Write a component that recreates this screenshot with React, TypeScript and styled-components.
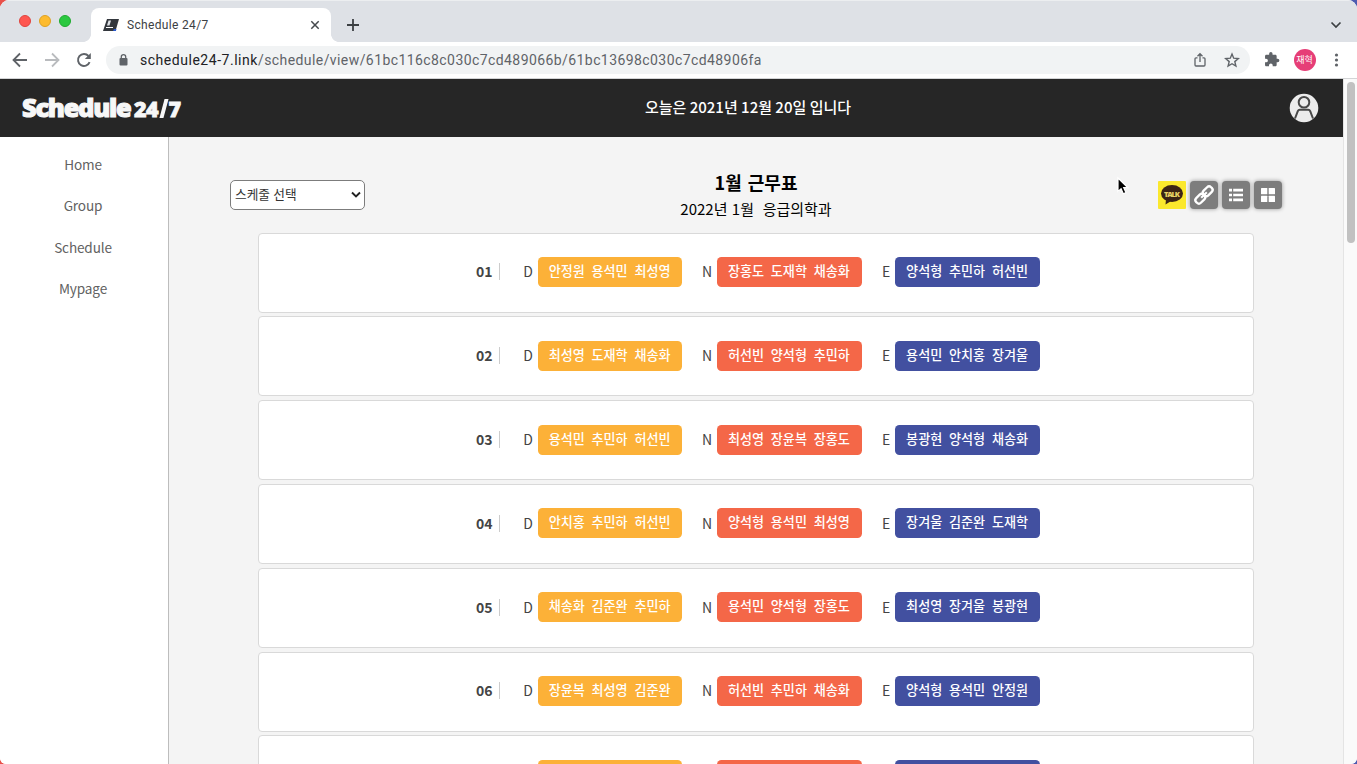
import React from 'react';
import styled, { createGlobalStyle } from 'styled-components';

const Global = createGlobalStyle`
  * { box-sizing: border-box; }
  html, body { margin: 0; height: 764px; overflow: hidden; }
  body { background: linear-gradient(90deg, #e8504a 50%, #4d5bb0 50%); font-family: "Noto Sans CJK KR", sans-serif; }
`;

const Window = styled.div`
  width: 1357px;
  height: 764px;
  display: flex;
  flex-direction: column;
  overflow: hidden;
  border-radius: 9px 9px 6px 6px;
  background: #fff;
`;

const TabStrip = styled.div`
  height: 42px;
  flex: none;
  display: flex;
  align-items: center;
  background: #dee1e6;
  box-shadow: inset 0 1px 0 #eceef0;
  padding: 0 14px 0 19px;
`;

const Lights = styled.div`
  display: flex;
  gap: 8px;
  width: 72px;
`;

const Light = styled.i<{ $color: string; $edge: string }>`
  width: 12px;
  height: 12px;
  border-radius: 50%;
  background: ${(p) => p.$color};
  border: 1px solid ${(p) => p.$edge};
`;

const Tab = styled.div`
  align-self: flex-end;
  width: 240px;
  height: 34px;
  padding: 0 10px 0 12px;
  display: flex;
  align-items: center;
  background: #fff;
  border-radius: 8px 8px 0 0;
  position: relative;
  &::before, &::after {
    content: '';
    position: absolute;
    bottom: 0;
    width: 8px;
    height: 8px;
  }
  &::before { left: -8px; background: radial-gradient(circle at 0 0, #dee1e6 7.6px, #fff 8.2px); }
  &::after { right: -8px; background: radial-gradient(circle at 100% 0, #dee1e6 7.6px, #fff 8.2px); }
`;

const TabTitle = styled.span`
  flex: 1;
  margin-left: 8px;
  font: 12px/16px Roboto, sans-serif;
  letter-spacing: 0.33px;
  color: #3c4043;
`;

const NewTab = styled.div`
  display: flex;
  flex: 1;
  padding: 7px 0 0 15px;
`;

const Chevron = styled.div`
  display: flex;
  padding-top: 7px;
`;

const Toolbar = styled.div`
  height: 37px;
  flex: none;
  display: flex;
  align-items: center;
  border-bottom: 1px solid #d3d4d6;
  padding: 0 13px 0 12px;
  background: #fff;
`;

const NavButtons = styled.div`
  display: flex;
  gap: 16px;
  width: 94px;
`;

const AddressBar = styled.div`
  width: 1144px;
  height: 28px;
  border-radius: 14px;
  background: #f1f3f4;
  display: flex;
  align-items: center;
  padding: 0 10px 0 11px;
  gap: 16px;
`;

const Url = styled.span`
  flex: 1;
  margin-left: -6px;
  font: 14px/20px Roboto, sans-serif;
  letter-spacing: 0.42px;
  color: #5f6368;
  b { font-weight: 400; letter-spacing: 0.53px; color: #202124; }
`;

const Extensions = styled.div`
  flex: 1;
  display: flex;
  align-items: center;
  justify-content: space-between;
  margin-left: 12px;
`;

const Profile = styled.span`
  width: 22px;
  height: 22px;
  border-radius: 50%;
  background: #e63e77;
  color: #fff;
  font: 9px/21px "Noto Sans CJK KR", sans-serif;
  text-align: center;
  margin-left: -1px;
`;

const Viewport = styled.div`
  flex: 1;
  min-height: 0;
  display: flex;
`;

const Page = styled.div`
  width: 1343px;
  display: flex;
  flex-direction: column;
`;

const Scrollbar = styled.div`
  width: 14px;
  background: #fafafa;
  border-left: 1px solid #e4e4e4;
  padding: 3px 1px 0 3px;
`;

const Thumb = styled.div`
  width: 8px;
  height: 161px;
  border-radius: 4px;
  background: #c1c1c1;
`;

const Header = styled.header`
  height: 58px;
  flex: none;
  display: flex;
  align-items: center;
  background: #262626;
  padding: 0 24px 0 22px;
`;

const LogoBox = styled.div`
  display: flex;
  align-items: baseline;
  width: 169px;
  color: #f7f7f7;
  font: 800 25.5px/36px "Open Sans", sans-serif;
`;

const LogoWord = styled.span`
  width: 112px;
  letter-spacing: -1.3px;
  -webkit-text-stroke: 1.1px #f7f7f7;
`;

const LogoNumber = styled.span`
  font-size: 21.5px;
  letter-spacing: -0.6px;
  -webkit-text-stroke: 0.8px #f7f7f7;
`;

const LogoSlash = styled.i`
  width: 3.5px;
  height: 19px;
  margin: 0 3px 0 4px;
  align-self: center;
  background: #f7f7f7;
  transform: skewX(-15deg);
`;

const Today = styled.div`
  flex: 1;
  text-align: center;
  font: 500 15px/20px "Noto Sans CJK KR", sans-serif;
  color: #fff;
  padding: 0 0 3px 16px;
`;

const Body = styled.div`
  flex: 1;
  display: flex;
  min-height: 0;
`;

const Sidebar = styled.nav`
  width: 169px;
  border-right: 1px solid #bdbdbd;
  display: flex;
  flex-direction: column;
  align-items: center;
  padding: 17px 2px 0 0;
  gap: 21.4px;
  background: #fff;
`;

const NavLink = styled.a`
  font: 13.6px/20px "Noto Sans CJK KR", sans-serif;
  letter-spacing: -0.15px;
  color: #626262;
`;

const Main = styled.main`
  flex: 1;
  display: flex;
  flex-direction: column;
  background: #f4f4f4;
  overflow: hidden;
`;

const TopRow = styled.div`
  height: 96px;
  flex: none;
  display: grid;
  grid-template-columns: 135px 1fr 135px;
  padding: 0 61px 0 61px;
`;

const Select = styled.div`
  height: 30px;
  margin-top: 43px;
  display: flex;
  justify-content: space-between;
  align-items: center;
  padding: 0 3px 2px 4px;
  border: 1px solid #7c7c7c;
  border-radius: 5px;
  background: #fff;
  color: #333;
  font: 12.7px/18px "Noto Sans CJK KR", sans-serif;
  word-spacing: 0.5px;
`;

const Titles = styled.div`
  text-align: center;
  padding-top: 32px;
  color: #000;
`;

const Title = styled.h1`
  margin: 0;
  font: 700 18px/26px "Noto Sans CJK KR", sans-serif;
  word-spacing: 2px;
`;

const Subtitle = styled.div`
  font: 15px/28px "Noto Sans CJK KR", sans-serif;
  word-spacing: 1px;
  white-space: pre;
`;

const Actions = styled.div`
  display: flex;
  gap: 4px;
  padding-top: 44px;
  justify-content: flex-end;
`;

const Action = styled.button<{ $kakao?: boolean }>`
  width: 28px;
  height: 28px;
  padding: 0;
  border: 0;
  border-radius: ${(p) => (p.$kakao ? '1px' : '4px')};
  background: ${(p) => (p.$kakao ? '#fbe82d' : '#7d7d7d')};
  box-shadow: ${(p) => (p.$kakao ? 'none' : '0 0 4px rgba(0,0,0,.4)')};
  display: flex;
  align-items: center;
  justify-content: center;
`;

const List = styled.div`
  display: flex;
  flex-direction: column;
  gap: 3.8px;
  padding: 0 89px;
  margin-top: -0.4px;
`;

const Card = styled.div`
  height: 80px;
  flex: none;
  display: flex;
  align-items: center;
  border: 1px solid #d9d9d9;
  border-radius: 4px;
  background: #fff;
  padding: 0 0 1.4px 216px;
`;

const Day = styled.span`
  width: 25px;
  height: 17px;
  border-right: 1px solid #ccc;
  padding-right: 6.5px;
  text-align: right;
  font: 700 14px/16px "Noto Sans CJK KR", sans-serif;
  color: #444;
`;

const Shift = styled.div`
  display: flex;
  align-items: center;
  justify-content: flex-end;
  gap: 5px;
  width: 179.3px;
  &:first-of-type { width: 182.4px; }
  &:last-of-type { width: 178.2px; }
`;

const Letter = styled.span`
  font: 14px/20px "Noto Sans CJK KR", sans-serif;
  color: #444;
  padding-bottom: 1px;
`;

const Names = styled.span<{ $color: string }>`
  width: 144.6px;
  height: 30px;
  border-radius: 4.5px;
  background: ${(p) => p.$color};
  color: #fff;
  text-align: center;
  font: 500 13.1px/28px "Noto Sans CJK KR", sans-serif;
  word-spacing: 3.8px;
  padding-right: 1px;
`;

const Cursor = styled.svg`
  position: absolute;
  left: 1116px;
  top: 176px;
`;

const COLORS: Record<string, string> = { D: '#fcb138', N: '#f46748', E: '#4250a0' };
const DAYS: string[][] = [
  ['안정원 용석민 최성영', '장홍도 도재학 채송화', '양석형 추민하 허선빈'],
  ['최성영 도재학 채송화', '허선빈 양석형 추민하', '용석민 안치홍 장겨울'],
  ['용석민 추민하 허선빈', '최성영 장윤복 장홍도', '봉광현 양석형 채송화'],
  ['안치홍 추민하 허선빈', '양석형 용석민 최성영', '장겨울 김준완 도재학'],
  ['채송화 김준완 추민하', '용석민 양석형 장홍도', '최성영 장겨울 봉광현'],
  ['장윤복 최성영 김준완', '허선빈 추민하 채송화', '양석형 용석민 안정원'],
];

const stroke = (color: string, width: number) => ({ fill: 'none', stroke: color, strokeWidth: width });

const Logo = () => (
  <LogoBox>
    <LogoWord>Schedule</LogoWord>
    <LogoNumber>24</LogoNumber>
    <LogoSlash />
    <LogoNumber>7</LogoNumber>
  </LogoBox>
);

const Browser = () => (
  <>
    <TabStrip>
      <Lights>
        <Light $color="#fe5650" $edge="#e0443e" />
        <Light $color="#fdbb2f" $edge="#dea123" />
        <Light $color="#2bc840" $edge="#1fab2f" />
      </Lights>
      <Tab>
        <svg width="16" height="14" viewBox="0 0 16 14">
          <path d="M4 1h12l-3.500 12H0z" fill="#33373d" />
          <path d="M5.500 2.500h2.500L6.500 7.500H4z" fill="#dfe2e6" />
          <path d="M3 9.500h7" stroke="#fff" strokeWidth="1.200" />
          <path d="M11 11h2.500l-.6 2H10z" fill="#2b5bd0" />
        </svg>
        <TabTitle>Schedule 24/7</TabTitle>
        <svg width="12" height="12" viewBox="0 0 12 12"><path d="M2.300 2.300l7.400 7.400M9.700 2.300L2.300 9.700" {...stroke('#45494d', 1.5)} /></svg>
      </Tab>
      <NewTab>
        <svg width="14" height="14" viewBox="0 0 14 14"><path d="M7 1v12M1 7h12" {...stroke('#3c4043', 1.8)} /></svg>
      </NewTab>
      <Chevron>
        <svg width="14" height="10" viewBox="0 0 14 10"><path d="M2.500 2.500L7 7l4.500-4.500" {...stroke('#3c4043', 1.7)} /></svg>
      </Chevron>
    </TabStrip>
    <Toolbar>
      <NavButtons>
        <svg width="16" height="16" viewBox="0 0 16 16"><path d="M15 8H2M8 1.500L1.500 8 8 14.500" {...stroke('#5f6368', 1.8)} /></svg>
        <svg width="16" height="16" viewBox="0 0 16 16"><path d="M1 8h13M8 1.500L14.500 8 8 14.500" {...stroke('#b9bbbe', 1.8)} /></svg>
        <svg width="16" height="16" viewBox="0 0 16 16">
          <path d="M13.600 10.200A6 6 0 1 1 12.500 4" {...stroke('#5f6368', 1.9)} />
          <path d="M14.800 1v6H8.800z" fill="#5f6368" />
        </svg>
      </NavButtons>
      <AddressBar>
        <svg width="13" height="14" viewBox="0 0 13 14">
          <rect x="2.500" y="5" width="8" height="7.500" rx="1" fill="#5f6368" />
          <path d="M4.300 5.500V3.800a2.200 2.200 0 0 1 4.400 0v1.700" {...stroke('#5f6368', 1.3)} />
        </svg>
        <Url><b>schedule24-7.link</b>/schedule/view/61bc116c8c030c7cd489066b/61bc13698c030c7cd48906fa</Url>
        <svg width="16" height="16" viewBox="0 0 16 16">
          <path d="M5.500 5.800H4a1 1 0 0 0-1 1V13a1 1 0 0 0 1 1h8a1 1 0 0 0 1-1V6.800a1 1 0 0 0-1-1h-1.500M8 10V2M5.500 4.200L8 1.700l2.500 2.500" {...stroke('#5f6368', 1.3)} />
        </svg>
        <svg width="16" height="16" viewBox="0 0 16 16">
          <path d="M8 2l1.700 4.200 4.600.4-3.500 3 1.100 4.500L8 11.700l-3.900 2.400 1.100-4.500-3.500-3 4.600-.4z" {...stroke('#5f6368', 1.4)} />
        </svg>
      </AddressBar>
      <Extensions>
        <svg width="20" height="20" viewBox="0 0 24 24">
          <path fill="#5f6368" d="M20.500 11H19V7c0-1.100-.9-2-2-2h-4V3.500a2.500 2.500 0 0 0-5 0V5H4c-1.100 0-2 .9-2 2v3.800h1.500a2.700 2.700 0 0 1 0 5.400H2V20c0 1.100.9 2 2 2h3.800v-1.500a2.700 2.700 0 0 1 5.400 0V22H17c1.100 0 2-.9 2-2v-4h1.500a2.500 2.500 0 0 0 0-5z" transform="translate(2 1.500) scale(.82)" />
        </svg>
        <Profile>재혁</Profile>
        <svg width="16" height="16" viewBox="0 0 16 16" fill="#5f6368">
          <circle cx="8.500" cy="3" r="1.600" /><circle cx="8.500" cy="8" r="1.600" /><circle cx="8.500" cy="13" r="1.600" />
        </svg>
      </Extensions>
    </Toolbar>
  </>
);

const ActionButtons = () => (
  <Actions>
    <Action $kakao>
      <svg width="28" height="28" viewBox="0 0 28 28">
        <ellipse cx="14" cy="12.500" rx="11" ry="8.500" fill="#3c2415" />
        <path d="M8 18l-.5 5.500 6.500-4z" fill="#3c2415" />
        <text x="6" y="15.500" fontFamily="Open Sans, sans-serif" fontWeight="800" fontSize="7.500" textLength="16" fill="#e9d264">TALK</text>
      </svg>
    </Action>
    <Action>
      <svg width="24" height="24" viewBox="0 0 24 24">
        <g transform="rotate(-45 12 12)" {...stroke('#fff', 2.3)}>
          <rect x="1.500" y="8.700" width="10.500" height="6.600" rx="2.800" />
          <rect x="12" y="8.700" width="10.500" height="6.600" rx="2.800" />
          <path d="M8 12h8" strokeWidth="2.200" />
        </g>
      </svg>
    </Action>
    <Action>
      <svg width="14" height="14" viewBox="0 0 14 14">
        <path d="M0 2.200h3M4.200 2.200H14M0 7h3M4.200 7H14M0 11.800h3M4.200 11.800H14" {...stroke('#fff', 2.7)} />
      </svg>
    </Action>
    <Action>
      <svg width="14" height="14" viewBox="0 0 14 14" fill="#fff">
        <rect width="6.300" height="6.300" rx=".5" /><rect x="7.700" width="6.300" height="6.300" rx=".5" />
        <rect y="7.700" width="6.300" height="6.300" rx=".5" /><rect x="7.700" y="7.700" width="6.300" height="6.300" rx=".5" />
      </svg>
    </Action>
  </Actions>
);

export default function App() {
  return (
    <Window>
      <Global />
      <Browser />
      <Viewport>
        <Page>
          <Header>
            <Logo />
            <Today>오늘은 2021년 12월 20일 입니다</Today>
            <svg width="30" height="30" viewBox="0 0 30 30">
              <circle cx="15" cy="15" r="14.300" fill="#ececec" />
              <circle cx="15" cy="9.300" r="5.300" {...stroke('#484848', 2)} />
              <path d="M6 25.500l2.800-7.300c.4-1 1-1.400 2-1.400h8.400c1 0 1.600.4 2 1.400L24 25.500" {...stroke('#484848', 2)} />
            </svg>
          </Header>
          <Body>
            <Sidebar>
              {['Home', 'Group', 'Schedule', 'Mypage'].map((l) => <NavLink key={l}>{l}</NavLink>)}
            </Sidebar>
            <Main>
              <TopRow>
                <Select>
                  스케줄 선택
                  <svg width="10" height="8" viewBox="0 0 10 8"><path d="M1 2.500l4 4 4-4" {...stroke('#222', 1.9)} /></svg>
                </Select>
                <Titles>
                  <Title>1월 근무표</Title>
                  <Subtitle>{'2022년 1월  응급의학과'}</Subtitle>
                </Titles>
                <ActionButtons />
              </TopRow>
              <List>
                {DAYS.map((names, i) => (
                  <Card key={i}>
                    <Day>{`0${i + 1}`}</Day>
                    {['D', 'N', 'E'].map((s, j) => (
                      <Shift key={s}>
                        <Letter>{s}</Letter>
                        <Names $color={COLORS[s]}>{names[j]}</Names>
                      </Shift>
                    ))}
                  </Card>
                ))}
                <Card>
                  <Day />
                  {['D', 'N', 'E'].map((s) => (
                    <Shift key={s}>
                      <Names $color={COLORS[s]} />
                    </Shift>
                  ))}
                </Card>
              </List>
            </Main>
          </Body>
        </Page>
        <Scrollbar><Thumb /></Scrollbar>
      </Viewport>
      <Cursor width="14" height="20" viewBox="0 0 14 20">
        <path d="M2 2v13.500l3.100-2.800 2.200 5 2.600-1.100-2.200-4.900h4.200z" fill="#000" stroke="#fff" strokeWidth="1.200" />
      </Cursor>
    </Window>
  );
}
